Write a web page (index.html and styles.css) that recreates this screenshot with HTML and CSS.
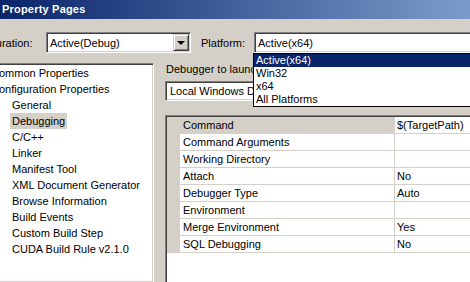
FILE: index.html
```html
<!DOCTYPE html>
<html>
<head>
<meta charset="utf-8">
<link rel="stylesheet" href="styles.css">
</head>
<body>
<div class="window">
  <div class="titlebar">Property Pages</div>
  <div class="config-row">
    <span class="lbl lbl-config">Configuration:</span>
    <div class="combo combo-config">
      <span class="combo-text">Active(Debug)</span>
      <span class="drop-btn"><span class="arrow"></span></span>
    </div>
    <span class="lbl lbl-platform">Platform:</span>
    <div class="combo combo-platform">
      <span class="combo-text">Active(x64)</span>
    </div>
  </div>
  <div class="main">
    <div class="tree">
      <div class="node top">Common Properties</div>
      <div class="node top">Configuration Properties</div>
      <div class="node child">General</div>
      <div class="node child"><span class="sel">Debugging</span></div>
      <div class="node child">C/C++</div>
      <div class="node child">Linker</div>
      <div class="node child">Manifest Tool</div>
      <div class="node child">XML Document Generator</div>
      <div class="node child">Browse Information</div>
      <div class="node child">Build Events</div>
      <div class="node child">Custom Build Step</div>
      <div class="node child">CUDA Build Rule v2.1.0</div>
    </div>
    <div class="pane">
      <div class="pane-label">Debugger to launch:</div>
      <div class="combo combo-debugger">
        <span class="combo-text">Local Windows Debugger</span>
      </div>
      <div class="grid">
        <div class="row selected"><span class="gutter"></span><span class="name">Command</span><span class="value">$(TargetPath)</span></div>
        <div class="row"><span class="gutter"></span><span class="name">Command Arguments</span><span class="value"></span></div>
        <div class="row"><span class="gutter"></span><span class="name">Working Directory</span><span class="value"></span></div>
        <div class="row"><span class="gutter"></span><span class="name">Attach</span><span class="value">No</span></div>
        <div class="row"><span class="gutter"></span><span class="name">Debugger Type</span><span class="value">Auto</span></div>
        <div class="row"><span class="gutter"></span><span class="name">Environment</span><span class="value"></span></div>
        <div class="row"><span class="gutter"></span><span class="name">Merge Environment</span><span class="value">Yes</span></div>
        <div class="row"><span class="gutter"></span><span class="name">SQL Debugging</span><span class="value">No</span></div>
      </div>
    </div>
  </div>
  <div class="dropdown-list">
    <div class="item active">Active(x64)</div>
    <div class="item">Win32</div>
    <div class="item">x64</div>
    <div class="item">All Platforms</div>
  </div>
</div>
</body>
</html>
```
FILE: styles.css
```css
html, body {
  margin: 0;
  padding: 0;
}
body {
  background: #d4d0c8;
  font-family: "Liberation Sans", Arial, sans-serif;
  font-size: 11px;
  color: #000;
  width: 470px;
  height: 282px;
  overflow: hidden;
}
.window {
  position: relative;
  width: 470px;
  height: 282px;
  overflow: hidden;
}
.titlebar {
  height: 19px;
  line-height: 19px;
  padding-left: 2px;
  color: #fff;
  font-weight: bold;
  font-size: 11px;
  letter-spacing: 0.2px;
  background: linear-gradient(to right, #0a246a 0px, #a6caf0 650px);
  width: 650px;
}
.config-row {
  display: flex;
  align-items: center;
  margin-top: 13px;
  height: 21px;
}
.lbl {
  white-space: nowrap;
  flex: none;
}
.lbl-config {
  margin-left: -36px;
  width: 82px;
}
.lbl-platform {
  margin-left: 10px;
  width: 53px;
}
.combo {
  position: relative;
  box-sizing: border-box;
  height: 21px;
  background: #fff;
  border: 1px solid;
  border-color: #808080 #fff #fff #808080;
  box-shadow: inset 1px 1px #404040, inset -1px -1px #d4d0c8;
  display: flex;
  align-items: center;
  flex: none;
  overflow: hidden;
  white-space: nowrap;
}
.combo-text {
  padding-left: 3px;
}
.combo-config {
  width: 145px;
}
.combo-platform {
  width: 260px;
}
.drop-btn {
  position: absolute;
  right: 1px;
  top: 1px;
  width: 16px;
  height: 17px;
  box-sizing: border-box;
  background: #d4d0c8;
  border: 1px solid;
  border-color: #d4d0c8 #404040 #404040 #d4d0c8;
  box-shadow: inset 1px 1px #fff, inset -1px -1px #808080;
  display: flex;
  align-items: center;
  justify-content: center;
}
.arrow {
  width: 0;
  height: 0;
  border-left: 4px solid transparent;
  border-right: 4px solid transparent;
  border-top: 4px solid #000;
  margin-top: 1px;
}
.main {
  display: flex;
  margin-top: 10px;
  height: 220px;
}
.tree {
  box-sizing: border-box;
  width: 164px;
  margin-left: -10px;
  flex: none;
  background: #fff;
  border: 1px solid;
  border-color: #808080 #fff #fff #808080;
  box-shadow: inset 1px 1px #404040, inset -1px -1px #d4d0c8;
  padding-top: 1px;
  overflow: hidden;
  white-space: nowrap;
}
.node {
  height: 16px;
  line-height: 16px;
}
.node.top {
  padding-left: 0;
}
.node.child {
  padding-left: 21px;
}
.sel {
  background: #d4d0c8;
  padding: 0 2px;
  margin-left: -2px;
  display: inline-block;
  height: 16px;
}
.pane {
  margin-left: 11px;
  flex: 1;
  display: flex;
  flex-direction: column;
  white-space: nowrap;
}
.pane-label {
  height: 13px;
  line-height: 13px;
  padding-left: 1px;
}
.combo-debugger {
  margin-top: 5px;
  width: 330px;
  height: 20px;
}
.combo-debugger .combo-text {
  padding-left: 4px;
}
.grid {
  margin-top: 14px;
  flex: 1;
  background: #fff;
  border-top: 1px solid #808080;
  border-left: 1px solid #808080;
  box-shadow: inset 1px 1px #404040;
  padding-top: 1px;
  padding-left: 1px;
  width: 400px;
}
.row {
  display: grid;
  grid-template-columns: 13px 214px 1fr;
  height: 17px;
  line-height: 16px;
}
.gutter {
  background: #d4d0c8;
}
.name {
  padding-left: 3px;
  border-bottom: 1px solid #d4d0c8;
}
.value {
  padding-left: 2px;
  border-left: 1px solid #d4d0c8;
  border-bottom: 1px solid #d4d0c8;
}
.row.selected .name {
  background: #d4d0c8;
}
.dropdown-list {
  position: absolute;
  left: 253px;
  top: 53px;
  width: 240px;
  background: #fff;
  border: 1px solid #000;
}
.item {
  height: 13px;
  line-height: 13px;
  padding-left: 2px;
  white-space: nowrap;
}
.item.active {
  background: #0a246a;
  color: #fff;
}
```
